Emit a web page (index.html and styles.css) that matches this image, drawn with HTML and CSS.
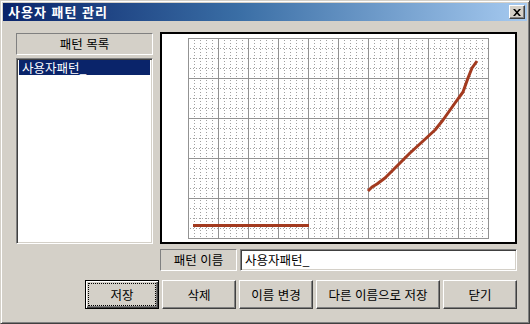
FILE: index.html
```html
<!DOCTYPE html>
<html lang="ko">
<head>
  <meta charset="UTF-8">
  <title>사용자 패턴 관리</title>
  <link rel="stylesheet" href="styles.css">
</head>
<body>
  <div class="window">
    <!-- 제목 표시줄 -->
    <div class="titlebar">
      <span class="title">사용자 패턴 관리</span>
      <div class="close">
        <svg width="8" height="7" viewBox="0 0 8 7">
          <path d="M0 0h2l2 2.2 2-2.2h2L5 3.5 8 7H6L4 4.8 2 7H0l3-3.5z" fill="#000"/>
        </svg>
      </div>
    </div>

    <div class="dialog">
      <div class="top">
        <div class="patterns">
          <div class="caption">패턴 목록</div>
          <ul class="list">
            <li class="selected">사용자패턴_</li>
          </ul>
        </div>

        <div class="right">
          <div class="canvas">
            <svg width="353" height="208" viewBox="162 34 353 208">
              <defs>
                <pattern id="dots" x="188" y="38" width="30" height="40" patternUnits="userSpaceOnUse">
                  <g stroke="#a0a0a0" stroke-width="1" stroke-dasharray="1 2">
                    <line x1="6.5" y1="2" x2="6.5" y2="40"/>
                    <line x1="12.5" y1="2" x2="12.5" y2="40"/>
                    <line x1="18.5" y1="2" x2="18.5" y2="40"/>
                    <line x1="24.5" y1="2" x2="24.5" y2="40"/>
                    <line x1="2" y1="10.5" x2="30" y2="10.5"/>
                    <line x1="2" y1="20.5" x2="30" y2="20.5"/>
                    <line x1="2" y1="30.5" x2="30" y2="30.5"/>
                  </g>
                </pattern>
              </defs>
              <rect x="188" y="38" width="300" height="200" fill="url(#dots)"/>
              <g stroke="#939393" stroke-width="1">
                <path d="M188.5 38v200M218.5 38v200M248.5 38v200M278.5 38v200M308.5 38v200M338.5 38v200M368.5 38v200M398.5 38v200M428.5 38v200M458.5 38v200M488.5 38v200"/>
                <path d="M188 38.5h301M188 78.5h301M188 118.5h301M188 158.5h301M188 198.5h301M188 238.5h301"/>
              </g>
              <g stroke="#a33a1f" stroke-width="3" fill="none" stroke-linejoin="round">
                <path d="M193 225.5H309"/>
                <polyline points="368,191 372,187 377,184 385,178 395,168 410,153 422,142 435,130 443,120 455,103 463,92 468,78 472,68 477,61"/>
              </g>
            </svg>
          </div>

          <div class="name-row">
            <div class="caption name-caption">패턴 이름</div>
            <div class="input">사용자패턴_</div>
          </div>
        </div>
      </div>

      <div class="buttons">
        <div class="btn default"><span>저장</span></div>
        <div class="btn">삭제</div>
        <div class="btn">이름 변경</div>
        <div class="btn wide">다른 이름으로 저장</div>
        <div class="btn">닫기</div>
      </div>
    </div>
  </div>
</body>
</html>
```

FILE: styles.css
```css
body {
  margin: 0;
  background: #d4d0c8;
  font-family: "Noto Sans CJK KR", "Noto Sans", sans-serif;
  font-size: 12.5px;
  color: #000;
}

.window {
  width: 530px;
  height: 324px;
  box-sizing: border-box;
  background: #d4d0c8;
  border: 1px solid;
  border-color: #d4d0c8 #404040 #404040 #d4d0c8;
  box-shadow: inset 1px 1px #fff, inset -1px -1px #808080;
  padding: 2px;
}

/* 제목 표시줄 */
.titlebar {
  height: 18px;
  display: flex;
  align-items: center;
  justify-content: space-between;
  padding: 0 2px 0 5px;
  background: linear-gradient(90deg, #0a246a 0%, #3a6ea5 45%, #a6caf0 100%);
}

.title {
  color: #fff;
  font-weight: bold;
  font-size: 13px;
  letter-spacing: 1px;
  line-height: 18px;
}

.close {
  width: 16px;
  height: 14px;
  box-sizing: border-box;
  background: #d4d0c8;
  border: 1px solid;
  border-color: #fff #404040 #404040 #fff;
  box-shadow: inset -1px -1px #808080;
  display: flex;
  align-items: center;
  justify-content: center;
  padding-right: 1px;
}

.dialog {
  padding: 11px 0 0 13px;
}

.top {
  display: flex;
  gap: 7px;
}

.patterns {
  width: 137px;
  margin-top: 1px;
  display: flex;
  flex-direction: column;
  gap: 3px;
}

.caption {
  height: 22px;
  box-sizing: border-box;
  border: 1px solid;
  border-color: #808080 #fff #fff #808080;
  display: flex;
  align-items: center;
  justify-content: center;
  line-height: 1;
}

.list {
  height: 186px;
  box-sizing: border-box;
  margin: 0;
  list-style: none;
  background: #fff;
  border: 1px solid;
  border-color: #808080 #fff #fff #808080;
  box-shadow: inset 1px 1px #404040, inset -1px -1px #d4d0c8;
  padding: 1px 2px 0 2px;
}

.list li {
  height: 15px;
  line-height: 15px;
  padding-left: 3px;
}

.list .selected {
  background: #0a246a;
  color: #fff;
}

.right {
  width: 357px;
  display: flex;
  flex-direction: column;
}

.canvas {
  height: 212px;
  box-sizing: border-box;
  background: #fff;
  border: 2px solid #000;
}

.canvas svg {
  display: block;
}

.name-row {
  display: flex;
  gap: 3px;
  margin-top: 5px;
}

.name-caption {
  width: 77px;
}

.input {
  flex: 1;
  height: 22px;
  box-sizing: border-box;
  background: #fff;
  border: 1px solid;
  border-color: #808080 #fff #fff #808080;
  box-shadow: inset 1px 1px #404040, inset -1px -1px #d4d0c8;
  padding: 0 4px;
  line-height: 19px;
}

.buttons {
  display: flex;
  justify-content: flex-end;
  gap: 3px;
  width: 501px;
  margin-top: 9px;
}

.btn {
  width: 74px;
  height: 29px;
  box-sizing: border-box;
  border: 1px solid;
  border-color: #fff #404040 #404040 #fff;
  box-shadow: inset -1px -1px #808080;
  display: flex;
  align-items: center;
  justify-content: center;
}

.btn.wide {
  width: 124px;
}

.btn.default {
  border: 1px solid #000;
  box-shadow: inset 1px 1px #fff, inset -1px -1px #404040, inset -2px -2px #808080;
  padding: 3px;
}

.btn.default span {
  flex: 1;
  align-self: stretch;
  display: flex;
  align-items: center;
  justify-content: center;
  outline: 1px dotted #000;
}
```
